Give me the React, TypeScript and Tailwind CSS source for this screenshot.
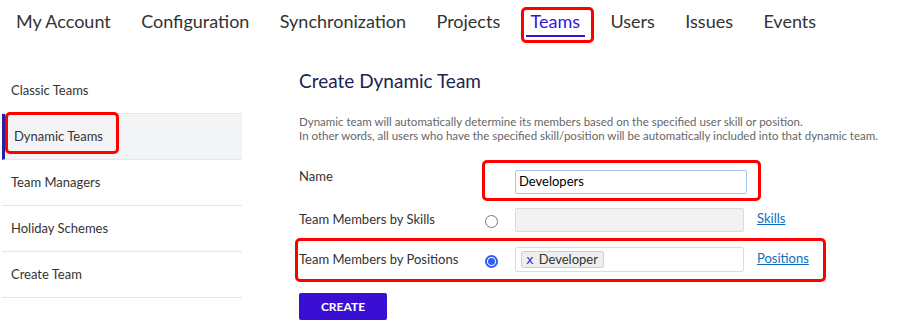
import React from "react";

const navItems = ["My Account", "Configuration", "Synchronization", "Projects", "Teams", "Users", "Issues", "Events"];
const sideItems = ["Classic Teams", "Dynamic Teams", "Team Managers", "Holiday Schemes", "Create Team"];

export default function App() {
  return (
    <div
      className="relative w-[899px] h-[329px] bg-white overflow-hidden text-[#333]"
      style={{ fontFamily: "Lato, 'Open Sans', sans-serif" }}
    >
      {/* Top nav */}
      <div className="h-[45px] flex items-start pl-[16px] pt-[10px] gap-[30.4px] text-[18px] leading-[22px]">
        {navItems.map((n) =>
          n === "Teams" ? (
            <span key={n} className="text-[#3217d6] px-[5px] -mx-[5px] border-b-2 border-[#3217d6] pb-[3px]">
              {n}
            </span>
          ) : (
            <span key={n}>{n}</span>
          )
        )}
      </div>

      <div className="flex">
        {/* Sidebar */}
        <div className="ml-[2px] w-[240px] mt-[23px] flex flex-col">
          {sideItems.map((s) =>
            s === "Dynamic Teams" ? (
              <div
                key={s}
                className="h-[46px] flex items-center pl-[9px] border-l-[3px] border-l-[#2a1fa3] bg-[#f3f4f6] border-b border-b-[#e6e6e6] text-[13px]"
              >
                {s}
              </div>
            ) : (
              <div key={s} className="h-[46px] flex items-center pl-[9px] border-b border-[#e6e6e6] text-[13px]">
                {s}
              </div>
            )
          )}
        </div>

        {/* Main */}
        <div className="ml-[57px] pt-[24px] flex flex-col">
          <div className="text-[19px] leading-[24px] text-[#1c2452]">Create Dynamic Team</div>
          <div className="mt-[22px] text-[11.5px] leading-[14px] text-[#666] whitespace-nowrap">
            <div>Dynamic team will automatically determine its members based on the specified user skill or position.</div>
            <div>In other words, all users who have the specified skill/position will be automatically included into that dynamic team.</div>
          </div>

          {/* Name row */}
          <div className="mt-[27px] flex items-center text-[13px]">
            <div className="w-[186px] -mt-[10px]">Name</div>
            <div className="w-[13px]" />
            <div className="ml-[17px] w-[232px] h-[24px] border border-[#a4c8f5] rounded-[2px] flex items-center pl-[3px] text-black">
              Developers
            </div>
          </div>

          {/* Skills row */}
          <div className="mt-[14px] flex items-center text-[13px]">
            <div className="w-[186px]">Team Members by Skills</div>
            <div className="w-[13px] h-[13px] rounded-full border border-[#767676] bg-white mt-[3px]" />
            <div className="ml-[17px] w-[229px] h-[24px] border border-[#dcdcdc] rounded-[2px] bg-[#f2f2f2]" />
            <a className="ml-[13px] text-[#0b6fc0] underline -mt-[2px]">Skills</a>
          </div>

          {/* Positions row */}
          <div className="mt-[15px] flex items-center text-[13px]">
            <div className="w-[186px]">Team Members by Positions</div>
            <div className="w-[13px] h-[13px] rounded-full border-2 border-[#2f5df5] bg-white flex items-center justify-center mt-[3px]">
              <div className="w-[7px] h-[7px] rounded-full bg-[#2f5df5]" />
            </div>
            <div className="ml-[17px] w-[229px] h-[25px] border border-[#dcdcdc] rounded-[2px] bg-white flex items-center pl-[5px]">
              <div className="h-[17px] flex items-center border border-[#cfcfcf] bg-[#eeeeee] rounded-[2px] pl-[4px] pr-[5px]">
                <span className="text-[#3a2bd0] text-[13px] mr-[5px] leading-none" style={{ fontFamily: "'DejaVu Sans', sans-serif" }}>x</span>
                <span className="text-[13px] leading-none">Developer</span>
              </div>
            </div>
            <a className="ml-[13px] text-[#0b6fc0] underline -mt-[2px]">Positions</a>
          </div>

          <button className="mt-[21px] w-[88px] h-[27px] bg-[#3a0fd4] rounded-[2px] text-white font-bold text-[12px] flex items-center justify-center">
            CREATE
          </button>
        </div>
      </div>

      {/* Red annotation boxes */}
      <div className="absolute left-[521px] top-[7px] w-[73px] h-[36px] border-[3px] border-[#ff0000] rounded-[5px]" />
      <div className="absolute left-[5px] top-[112px] w-[114px] h-[42px] border-[3px] border-[#ff0000] rounded-[5px]" />
      <div className="absolute left-[482px] top-[160px] w-[279px] h-[41px] border-[3px] border-[#ff0000] rounded-[5px]" />
      <div className="absolute left-[295px] top-[238px] w-[531px] h-[44px] border-[3px] border-[#ff0000] rounded-[5px]" />
    </div>
  );
}
